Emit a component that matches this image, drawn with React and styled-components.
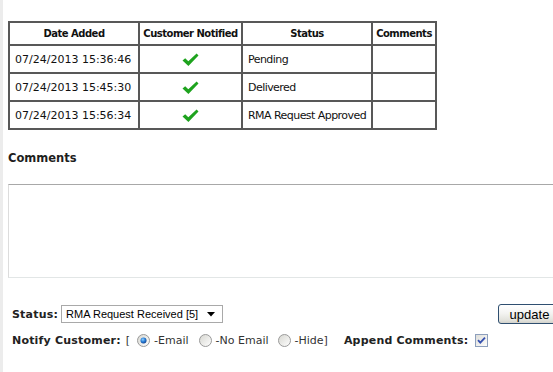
import React from 'react';
import styled, { createGlobalStyle } from 'styled-components';

const Global = createGlobalStyle`
  html, body { margin: 0; padding: 0; overflow: hidden; background: #fff; }
  body { font-family: "DejaVu Sans", Verdana, sans-serif; color: #000; }
`;

const Page = styled.div`
  width: 553px;
  height: 372px;
  box-sizing: border-box;
  border-left: 3px solid #ececec;
  padding: 21px 0 0 5px;
  overflow: hidden;
`;

const History = styled.div`
  display: grid;
  grid-template-columns: 130px 103px 130px 64px;
  grid-template-rows: 23px;
  grid-auto-rows: 28px;
  width: max-content;
  border-left: 2px solid #585858;
  border-top: 2px solid #585858;
`;

const Cell = styled.div`
  box-sizing: border-box;
  border-right: 2px solid #585858;
  border-bottom: 2px solid #585858;
  display: flex;
  align-items: center;
  justify-content: ${(p) => (p.$center ? 'center' : 'flex-start')};
  padding: 1px 5px 0;
  font-size: 11px;
  color: #111;
  white-space: nowrap;
`;

const HeadCell = styled(Cell)`
  justify-content: center;
  padding-top: 0;
  font-weight: bold;
  font-size: 10px;
  letter-spacing: -0.5px;
  color: #111;
`;

const StatusText = styled.span`
  letter-spacing: -0.55px;
`;

const Heading = styled.h3`
  margin: 21px 0 0;
  font-size: 11.5px;
  line-height: 14px;
  font-weight: bold;
  color: #1e1e1e;
`;

const CommentBox = styled.textarea`
  display: block;
  box-sizing: border-box;
  margin: 19px 0 0;
  width: 640px;
  height: 94px;
  border: 1px solid #dcdcdc;
  border-top-color: #a8a8a8;
  border-bottom-color: #e2e6e6;
  resize: none;
  outline: none;
  background: #fff;
`;

const StatusRow = styled.div`
  margin-top: 26px;
  width: 553px;
  height: 20px;
  display: flex;
  align-items: center;
  justify-content: space-between;
`;

const Group = styled.div`
  display: flex;
  align-items: center;
  gap: ${(p) => p.$gap || 0}px;
  padding-left: ${(p) => p.$pad || 0}px;
`;

const Label = styled.span`
  font-size: 11px;
  font-weight: bold;
  letter-spacing: 0.2px;
  color: #222;
  white-space: nowrap;
  margin-left: ${(p) => p.$ml || 0}px;
`;

const SelectBox = styled.div`
  box-sizing: border-box;
  width: 162px;
  height: 18px;
  border: 1px solid #a9a9a9;
  background: #fff;
  display: flex;
  align-items: center;
  justify-content: space-between;
  padding: 0 7px 0 4px;
  font-family: "Liberation Sans", Arial, sans-serif;
  font-size: 11px;
  color: #000;
`;

const UpdateButton = styled.button`
  box-sizing: border-box;
  width: 63px;
  height: 20px;
  padding: 0;
  border: 1px solid #2f4f70;
  border-radius: 3px;
  background: linear-gradient(#ffffff, #f4f4f2 45%, #e2e2dc 85%, #d2d2cc);
  font-family: "Liberation Sans", Arial, sans-serif;
  font-size: 13px;
  color: #000;
`;

const NotifyRow = styled.div`
  margin-top: 8px;
  height: 16px;
  display: flex;
  align-items: center;
  padding-left: 4px;
`;

const Plain = styled.span`
  font-size: 11px;
  color: #333;
  white-space: nowrap;
  margin: ${(p) => p.$m || '0'};
`;

const Option = styled.label`
  display: flex;
  align-items: center;
  gap: 4px;
  margin-left: ${(p) => p.$ml || 0}px;
`;

const Check = () => (
  <svg width="17" height="14" viewBox="0 0 17 14">
    <path d="M0.5 7.5 L3.2 5.2 L6.3 8.3 L14.6 0.6 L16.5 2.6 L6.4 13 Z" fill="#1ea31e" />
  </svg>
);

const Radio = ({ checked }) => (
  <svg width="13" height="13" viewBox="0 0 13 13">
    <defs>
      <linearGradient id={checked ? 'rbOn' : 'rbOff'} x1="0" y1="0" x2="1" y2="1">
        <stop offset="0" stopColor="#d6d6d0" />
        <stop offset="1" stopColor="#ffffff" />
      </linearGradient>
      <radialGradient id="dot" cx="0.4" cy="0.35" r="0.7">
        <stop offset="0" stopColor="#8fd0ff" />
        <stop offset="0.5" stopColor="#2b7fd6" />
        <stop offset="1" stopColor="#0e3f8f" />
      </radialGradient>
    </defs>
    <circle cx="6.5" cy="6.5" r="6" fill={`url(#${checked ? 'rbOn' : 'rbOff'})`} stroke="#9a9a9a" />
    {checked && <circle cx="6.5" cy="6.5" r="3" fill="url(#dot)" />}
  </svg>
);

const CheckBox = () => (
  <svg width="13" height="13" viewBox="0 0 13 13">
    <defs>
      <linearGradient id="cbg" x1="0" y1="0" x2="1" y2="1">
        <stop offset="0" stopColor="#dcdcd7" />
        <stop offset="1" stopColor="#ffffff" />
      </linearGradient>
    </defs>
    <rect x="0.5" y="0.5" width="12" height="12" fill="url(#cbg)" stroke="#8d9fbc" />
    <path d="M3 6.2 L5.3 8.6 L10 3.6" fill="none" stroke="#3550b0" strokeWidth="1.8" />
  </svg>
);

const Arrow = () => (
  <svg width="8" height="5" viewBox="0 0 8 5">
    <path d="M0 0 H8 L4 4.5 Z" fill="#000" />
  </svg>
);

const rows = [
  ['07/24/2013 15:36:46', 'Pending'],
  ['07/24/2013 15:45:30', 'Delivered'],
  ['07/24/2013 15:56:34', 'RMA Request Approved'],
];

export default function App() {
  return (
    <>
      <Global />
      <Page>
        <History>
          <HeadCell>Date Added</HeadCell>
          <HeadCell>Customer Notified</HeadCell>
          <HeadCell>Status</HeadCell>
          <HeadCell>Comments</HeadCell>
          {rows.map(([date, status]) => (
            <React.Fragment key={date}>
              <Cell>{date}</Cell>
              <Cell $center>
                <Check />
              </Cell>
              <Cell>
                <StatusText>{status}</StatusText>
              </Cell>
              <Cell />
            </React.Fragment>
          ))}
        </History>

        <Heading>Comments</Heading>
        <CommentBox />

        <StatusRow>
          <Group $gap={3} $pad={4}>
            <Label>Status:</Label>
            <SelectBox>
              <span>RMA Request Received [5]</span>
              <Arrow />
            </SelectBox>
          </Group>
          <UpdateButton>update</UpdateButton>
        </StatusRow>

        <NotifyRow>
          <Label>Notify Customer:</Label>
          <Plain $m="0 0 0 5px">[</Plain>
          <Option $ml={7}>
            <Radio checked />
            <Plain>-Email</Plain>
          </Option>
          <Option $ml={10}>
            <Radio />
            <Plain>-No Email</Plain>
          </Option>
          <Option $ml={9}>
            <Radio />
            <Plain>-Hide]</Plain>
          </Option>
          <Label $ml={16}>Append Comments:</Label>
          <Option $ml={7}>
            <CheckBox />
          </Option>
        </NotifyRow>
      </Page>
    </>
  );
}
